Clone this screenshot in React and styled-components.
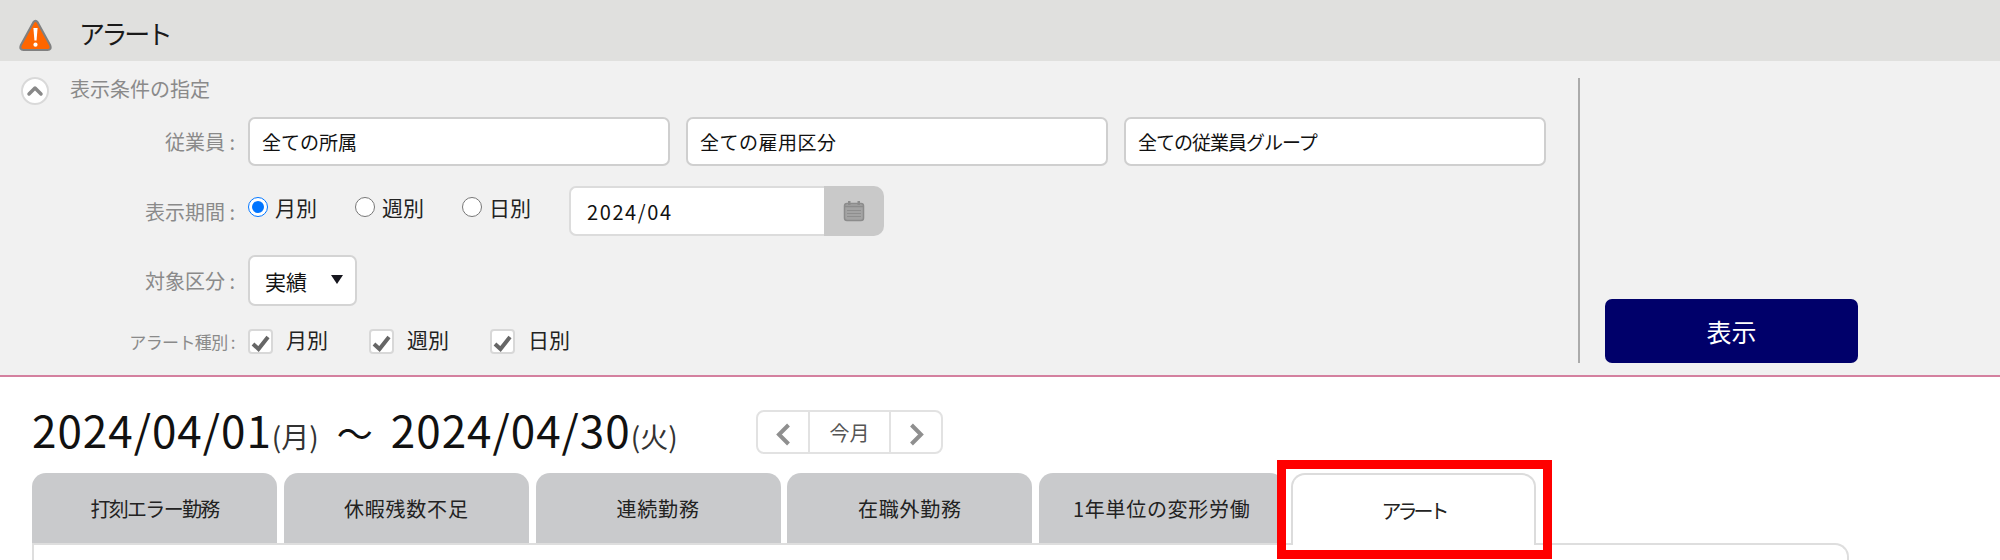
import React from "react";
import styled, { createGlobalStyle } from "styled-components";
import { ChevronUp } from "lucide-react";

const GlobalStyle = createGlobalStyle`
  html, body {
    margin: 0;
    padding: 0;
    background: #fff;
  }
  body {
    font-family: "Noto Sans CJK JP", "Noto Sans", sans-serif;
    color: #111;
  }
`;

const Page = styled.div`
  width: 2000px;
  height: 560px;
  overflow: hidden;
`;

const Header = styled.header`
  height: 61px;
  box-sizing: border-box;
  background: #e0e0de;
  display: flex;
  align-items: center;
  padding: 4px 0 0 19px;
  gap: 27px;
`;

const HeaderIcon = styled.span`
  display: flex;
  margin-top: 5px;
`;

const HeaderTitle = styled.h1`
  margin: 0;
  font-size: 26px;
  font-weight: 400;
  letter-spacing: -3.4px;
  line-height: 1;
  color: #1a1a1a;
`;

const Panel = styled.section`
  height: 316px;
  box-sizing: border-box;
  background: #f1f1f1;
  border-bottom: 2px solid #d4809f;
  padding: 17px 0 12px;
  display: flex;
`;

const FilterColumn = styled.div`
  width: 1578px;
  margin-top: -1px;
`;

const Heading = styled.div`
  display: flex;
  align-items: center;
  gap: 21px;
  padding-left: 21px;
  height: 28px;
  margin-bottom: 12px;
`;

const HeadingText = styled.span`
  font-size: 20px;
  line-height: 24px;
  color: #8a8a8a;
  margin-bottom: 5px;
`;

const CollapseButton = styled.span`
  width: 28px;
  height: 28px;
  box-sizing: border-box;
  border-radius: 50%;
  background: #fff;
  border: 2px solid #d9d9d9;
  display: flex;
  align-items: center;
  justify-content: center;
  color: #888;
`;

const Row = styled.div`
  display: flex;
  align-items: center;
  margin-top: ${(p) => p.$top || 0}px;
`;

const RowLabel = styled.label`
  width: 235px;
  margin-right: 13px;
  flex: none;
  text-align: right;
  font-size: ${(p) => p.$size || 20}px;
  letter-spacing: ${(p) => p.$spacing || 0}px;
  color: #8a8a8a;
  white-space: nowrap;
`;

const SelectBox = styled.div`
  width: 422px;
  height: 49px;
  box-sizing: border-box;
  background: #fff;
  border: 2px solid #cfcfcf;
  border-radius: 7px;
  display: flex;
  align-items: center;
  padding-left: 12px;
  font-size: 19px;
  letter-spacing: ${(p) => p.$spacing || 0}px;
  margin-right: 16px;
  color: #111;
`;

const RadioGroup = styled.div`
  display: flex;
  margin-bottom: 8px;
`;

const RadioItem = styled.label`
  width: 107px;
  display: flex;
  align-items: center;
  gap: 7px;
  font-size: 21px;
  color: #222;
`;

const RadioInput = styled.input`
  width: 20px;
  height: 20px;
  margin: 0;
`;

const DateField = styled.div`
  width: 315px;
  height: 50px;
  display: flex;
`;

const DateValue = styled.div`
  flex: 1;
  box-sizing: border-box;
  background: #fff;
  border: 2px solid #dcdcdc;
  border-right: none;
  border-radius: 7px 0 0 7px;
  display: flex;
  align-items: center;
  padding-left: 16px;
  font-size: 20px;
  letter-spacing: 1.6px;
  color: #111;
`;

const DateButton = styled.div`
  width: 60px;
  background: #c9c9c9;
  border-radius: 0 10px 10px 0;
  display: flex;
  align-items: center;
  justify-content: center;
`;

const KindSelect = styled.div`
  width: 109px;
  height: 51px;
  box-sizing: border-box;
  background: #fff;
  border: 2px solid #d4d4d4;
  border-radius: 7px;
  display: flex;
  align-items: center;
  justify-content: space-between;
  padding: 0 12px 0 15px;
  font-size: 21px;
  color: #111;
`;

const Caret = styled.span`
  width: 0;
  height: 0;
  border-left: 6px solid transparent;
  border-right: 6px solid transparent;
  border-top: 9px solid #16161e;
  margin-bottom: 2px;
`;

const CheckGroup = styled.div`
  display: flex;
`;

const CheckItem = styled.label`
  width: 121px;
  display: flex;
  align-items: center;
  gap: 13px;
  font-size: 21px;
  color: #222;
`;

const CheckText = styled.span`
  line-height: 21px;
  margin-bottom: 4px;
`;

const CheckBox = styled.span`
  width: 25px;
  height: 25px;
  box-sizing: border-box;
  background: #fff;
  border: 2px solid #d8d8d8;
  border-radius: 4px;
  display: flex;
  align-items: center;
  justify-content: center;
`;

const ActionColumn = styled.div`
  flex: 1;
  border-left: 2px solid #ababab;
  padding-left: 25px;
  display: flex;
  align-items: flex-end;
`;

const ShowButton = styled.button`
  width: 253px;
  height: 64px;
  border: none;
  border-radius: 7px;
  background: #00006a;
  color: #fff;
  font-family: inherit;
  font-size: 25px;
`;

const Results = styled.main`
  padding: 33px 0 0 32px;
`;

const PeriodRow = styled.div`
  display: flex;
  align-items: center;
  height: 44px;
`;

const PeriodTitle = styled.div`
  width: 724px;
  font-size: 44px;
  letter-spacing: 1px;
  line-height: 44px;
  white-space: nowrap;
  color: #111;
`;

const Weekday = styled.span`
  font-size: 28px;
  letter-spacing: 0;
  color: #333;
`;

const Tilde = styled.span`
  font-size: 36px;
  letter-spacing: 0;
  margin: 0 18px;
`;

const Pager = styled.div`
  width: 187px;
  height: 44px;
  box-sizing: border-box;
  border: 2px solid #e2e2e2;
  border-radius: 8px;
  display: flex;
`;

const PagerArrow = styled.span`
  width: 50px;
  padding-top: 5px;
  box-sizing: border-box;
  display: flex;
  align-items: center;
  justify-content: center;
`;

const PagerToday = styled.span`
  flex: 1;
  border: solid #e2e2e2;
  border-width: 0 2px;
  display: flex;
  align-items: center;
  justify-content: center;
  font-size: 20px;
  color: #555;
`;

const TabBar = styled.nav`
  display: flex;
  gap: 6.8px;
  margin-top: 19px;
`;

const Tab = styled.div`
  position: relative;
  z-index: ${(p) => (p.$active ? 1 : 0)};
  width: 245px;
  height: ${(p) => (p.$active ? 72 : 70)}px;
  margin-bottom: ${(p) => (p.$active ? -2 : 0)}px;
  box-sizing: border-box;
  border-radius: 14px 14px 0 0;
  background: ${(p) => (p.$active ? "#fff" : "#c9cacc")};
  border: ${(p) => (p.$active ? "2px solid #dcdcdc" : "none")};
  border-bottom: none;
  display: flex;
  align-items: center;
  justify-content: center;
  font-size: 20px;
  letter-spacing: ${(p) => p.$spacing || 0}px;
  color: #222;
  white-space: nowrap;
`;

const Highlight = styled.span`
  position: absolute;
  left: -16px;
  right: -18px;
  top: -15px;
  height: 99px;
  box-sizing: border-box;
  border: 9px solid #ff0000;
`;

const TabBody = styled.div`
  width: 1817px;
  height: 40px;
  box-sizing: border-box;
  border: 2px solid #dedede;
  border-bottom: none;
  border-radius: 0 14px 0 0;
`;

const WarningIcon = () => (
  <svg width="33" height="32" viewBox="1 0.500 31 30.500">
    <path
      d="M14.500 3.500 Q16.500 1 18.500 3.500 L30.500 25.500 Q32 30 28 30 H5 Q1 30 2.500 25.500 Z"
      fill="#ff6600"
      stroke="#808080"
      strokeWidth="2"
      strokeLinejoin="round"
    />
    <path d="M14.500 9 H18.500 L17.500 21 H15.500 Z" fill="#fff" />
    <circle cx="16.500" cy="25" r="2" fill="#fff" />
  </svg>
);

const CalendarIcon = () => (
  <svg width="22" height="22" viewBox="0 0 22 22">
    <rect x="1.500" y="3.500" width="19" height="17" rx="2.500" fill="#a3a3a3" stroke="#8c8c8c" strokeWidth="1.500" />
    <rect x="5" y="1" width="2.500" height="4" fill="#8c8c8c" />
    <rect x="14.500" y="1" width="2.500" height="4" fill="#8c8c8c" />
    <path d="M1.500 6.500 H20.500" stroke="#8c8c8c" strokeWidth="1.500" />
    <path d="M4 10.500 H18 M4 13.500 H18 M4 16.500 H18" stroke="#8e8e8e" strokeWidth="1" />
  </svg>
);

const CheckMark = () => (
  <svg width="21" height="21" viewBox="0 0 21 21">
    <path d="M3 13 L8.500 18 L18 6" fill="none" stroke="#666" strokeWidth="4" />
  </svg>
);

const PagerChevron = ({ flip }) => (
  <svg width="15" height="23" viewBox="0 0 15 23">
    <path
      d={flip ? "M2.500 2 L12 11.500 L2.500 21" : "M12.500 2 L3 11.500 L12.500 21"}
      fill="none"
      stroke="#8f8f8f"
      strokeWidth="4"
    />
  </svg>
);

const tabs = [
  { label: "打刻エラー勤務", spacing: -1.7 },
  { label: "休暇残数不足", spacing: 0.8 },
  { label: "連続勤務", spacing: 0.8 },
  { label: "在職外勤務", spacing: 0.8 },
  { label: "1年単位の変形労働", spacing: 0.7 },
];

const App = () => {
  return (
    <Page>
      <GlobalStyle />
      <Header>
        <HeaderIcon>
          <WarningIcon />
        </HeaderIcon>
        <HeaderTitle>アラート</HeaderTitle>
      </Header>
      <Panel>
        <FilterColumn>
          <Heading>
            <CollapseButton>
              <ChevronUp size={26} strokeWidth={3.5} />
            </CollapseButton>
            <HeadingText>表示条件の指定</HeadingText>
          </Heading>
          <Row>
            <RowLabel>従業員 :</RowLabel>
            <SelectBox>全ての所属</SelectBox>
            <SelectBox $spacing={0.5}>全ての雇用区分</SelectBox>
            <SelectBox $spacing={-1}>全ての従業員グループ</SelectBox>
          </Row>
          <Row $top={20}>
            <RowLabel>表示期間 :</RowLabel>
            <RadioGroup>
              <RadioItem>
                <RadioInput type="radio" name="period" defaultChecked />
                月別
              </RadioItem>
              <RadioItem>
                <RadioInput type="radio" name="period" />
                週別
              </RadioItem>
              <RadioItem>
                <RadioInput type="radio" name="period" />
                日別
              </RadioItem>
            </RadioGroup>
            <DateField>
              <DateValue>2024/04</DateValue>
              <DateButton>
                <CalendarIcon />
              </DateButton>
            </DateField>
          </Row>
          <Row $top={19}>
            <RowLabel>対象区分 :</RowLabel>
            <KindSelect>
              実績
              <Caret />
            </KindSelect>
          </Row>
          <Row $top={23}>
            <RowLabel $size={17} $spacing={-0.6}>アラート種別 :</RowLabel>
            <CheckGroup>
              {["月別", "週別", "日別"].map((label) => (
                <CheckItem key={label}>
                  <CheckBox>
                    <CheckMark />
                  </CheckBox>
                  <CheckText>{label}</CheckText>
                </CheckItem>
              ))}
            </CheckGroup>
          </Row>
        </FilterColumn>
        <ActionColumn>
          <ShowButton>表示</ShowButton>
        </ActionColumn>
      </Panel>
      <Results>
        <PeriodRow>
          <PeriodTitle>
            2024/04/01<Weekday>(月)</Weekday>
            <Tilde>〜</Tilde>
            2024/04/30<Weekday>(火)</Weekday>
          </PeriodTitle>
          <Pager>
            <PagerArrow>
              <PagerChevron />
            </PagerArrow>
            <PagerToday>今月</PagerToday>
            <PagerArrow>
              <PagerChevron flip />
            </PagerArrow>
          </Pager>
        </PeriodRow>
        <TabBar>
          {tabs.map((tab) => (
            <Tab key={tab.label} $spacing={tab.spacing}>
              {tab.label}
            </Tab>
          ))}
          <Tab $active $spacing={-4}>
            アラート
            <Highlight />
          </Tab>
        </TabBar>
        <TabBody />
      </Results>
    </Page>
  );
};

export default App;
